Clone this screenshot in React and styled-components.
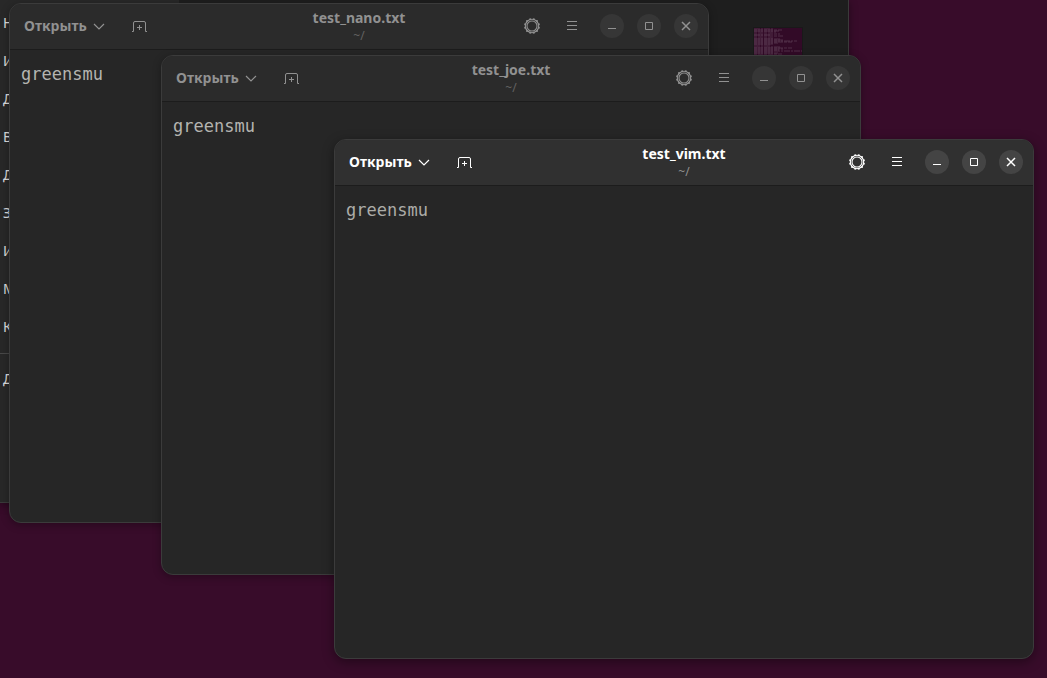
import React from "react";
import styled, { createGlobalStyle } from "styled-components";

const GlobalStyle = createGlobalStyle`
  * { box-sizing: border-box; }
  body {
    margin: 0;
    background: #380c2a;
    font-family: "Noto Sans", "Open Sans", sans-serif;
  }
`;

const Desktop = styled.main`
  position: relative;
  min-height: 100vh;
  overflow: hidden;
  background: #380c2a;
`;

/* File manager behind the editors, partly beyond the screen edge */
const FilesWindow = styled.section`
  position: absolute;
  left: 0;
  top: 0;
  width: 849px;
  height: 503px;
  display: grid;
  grid-template-columns: 179px 1fr;
  border-right: 1px solid #3a3a3a;
  border-bottom: 1px solid #3a3a3a;
  background: #1e1e1e;
  box-shadow: 0 2px 8px rgba(0, 0, 0, 0.4);
`;

const Places = styled.nav`
  padding-top: 4px;
  background: #282828;
`;

const PlaceList = styled.ul`
  list-style: none;
  margin: 0;
  padding: 0;

  & + & {
    margin-top: 7px;
    padding-top: 6px;
    border-top: 1px solid #484848;
  }
`;

const Place = styled.a`
  display: block;
  height: 38px;
  padding-left: 3px;
  font-size: 14px;
  line-height: 38px;
  color: #dedede;
  text-decoration: none;
`;

const FileGrid = styled.div`
  display: flex;
  justify-content: flex-end;
  align-items: flex-start;
  padding: 27px 45px;
`;

const Window = styled.section`
  position: absolute;
  left: ${(p) => p.$x}px;
  top: ${(p) => p.$y}px;
  width: 700px;
  height: 520px;
  display: flex;
  flex-direction: column;
  overflow: hidden;
  border: 1px solid #3b3b3b;
  border-radius: 12px;
  background: #262626;
  box-shadow: ${(p) =>
    p.$active ? "0 3px 12px rgba(0, 0, 0, 0.4)" : "0 2px 8px rgba(0, 0, 0, 0.3)"};
`;

const HeaderBar = styled.header`
  display: grid;
  grid-template-columns: 1fr auto 1fr;
  align-items: center;
  height: 46px;
  flex: none;
  padding-bottom: 2px;
  border-bottom: 1px solid #1c1c1c;
  background: ${(p) => (p.$active ? "#303030" : "#2b2b2b")};
  color: ${(p) => (p.$active ? "#ffffff" : "#919191")};
`;

const Group = styled.div`
  display: flex;
  align-items: center;
  justify-content: ${(p) => (p.$end ? "flex-end" : "flex-start")};
  padding: ${(p) => (p.$end ? "0 10px 0 0" : "0 0 0 14px")};
`;

const OpenButton = styled.button`
  display: flex;
  align-items: center;
  gap: 4px;
  padding: 0;
  margin-right: 17px;
  border: 0;
  background: none;
  color: inherit;
  font: bold 14px/24px "Noto Sans", "Open Sans", sans-serif;
`;

const IconButton = styled.button`
  display: grid;
  place-items: center;
  width: 32px;
  height: 32px;
  padding: 0;
  margin-right: ${(p) => p.$gap || 0}px;
  border: 0;
  background: none;
  color: inherit;
`;

const Controls = styled.div`
  display: flex;
  gap: 13px;
`;

const ControlButton = styled.button`
  display: grid;
  place-items: center;
  width: 24px;
  height: 24px;
  padding: 0;
  border: 0;
  border-radius: 50%;
  background: ${(p) => (p.$active ? "#444444" : "#363636")};
  color: inherit;
`;

const Titles = styled.div`
  align-self: start;
  padding-top: 5px;
  text-align: center;
`;

const Title = styled.h1`
  margin: 0;
  font-size: 14px;
  line-height: 18px;
  font-weight: bold;
`;

const Subtitle = styled.p`
  margin: 0;
  font-size: 12px;
  line-height: 18px;
  color: ${(p) => (p.$active ? "#8f8f8f" : "#626262")};
`;

const Editor = styled.textarea`
  flex: 1;
  width: 100%;
  padding: 12px 11px;
  border: 0;
  outline: 0;
  resize: none;
  background: transparent;
  color: ${(p) => (p.$active ? "#acaca8" : "#b4b4b0")};
  font: 17px/24px "DejaVu Sans Mono", monospace;
`;

const Icon = ({ children }) => (
  <svg
    width="16"
    height="16"
    viewBox="0 0 16 16"
    fill="none"
    stroke="currentColor"
    aria-hidden="true"
  >
    {children}
  </svg>
);

const ChevronIcon = () => (
  <Icon>
    <path d="M3 6l5 5 5-5" strokeWidth="1.2" />
  </Icon>
);

const NewTabIcon = () => (
  <Icon>
    <path d="M0 13.5H1.5V5Q1.5 3.5 3 3.5H12Q13.5 3.5 13.5 5V13.5H15M5 9.5H10M7.5 7V12" />
  </Icon>
);

const teeth = Array.from({ length: 12 }, (_, i) => {
  const a = ((i + 0.5) * Math.PI) / 6;
  return [8 + 7.1 * Math.cos(a), 8 + 7.1 * Math.sin(a)];
});

const GearIcon = () => (
  <Icon>
    <circle cx="8" cy="8" r="6.7" strokeWidth="1.1" />
    <circle cx="8" cy="8" r="5" strokeWidth="1.1" />
    {teeth.map(([x, y]) => (
      <circle key={`${x},${y}`} cx={x} cy={y} r="1" fill="currentColor" stroke="none" />
    ))}
  </Icon>
);

const MenuIcon = () => (
  <Icon>
    <path d="M3 3.5H13M3 7.5H13M3 11.5H13" />
  </Icon>
);

const MinimizeIcon = () => (
  <Icon>
    <path d="M4 10.5H12" />
  </Icon>
);

const MaximizeIcon = () => (
  <Icon>
    <path d="M4.5 4.5H11.5V11.5H4.5Z" />
  </Icon>
);

const CloseIcon = () => (
  <Icon>
    <path d="M4 4L12 12M12 4L4 12" strokeWidth="1.5" />
  </Icon>
);

const previewLines = [20, 28, 25, 22, 0, 26, 17, 29, 0, 20, 26, 29, 43, 38, 24, 19, 16, 0, 26, 38, 30, 25, 48, 20, 24, 28];

const Thumbnail = () => (
  <svg width="50" height="56" viewBox="0 0 50 56" role="img" aria-label="Снимок экрана">
    <rect width="49" height="56" x="0.5" y="0.5" fill="#320a27" stroke="#191919" />
    {previewLines.map((w, i) => (
      <path
        key={i}
        d={`M1 ${2 + i}H${w + 1}`}
        stroke="#765b72"
        strokeWidth="0.6"
        strokeDasharray={i % 2 ? "3 1 5 1" : "6 1 2 1"}
        opacity={w ? 0.75 : 0}
      />
    ))}
  </svg>
);

function EditorWindow({ name, x, y, active }) {
  return (
    <Window $x={x} $y={y} $active={active} aria-label={name}>
      <HeaderBar $active={active}>
        <Group>
          <OpenButton type="button">
            Открыть
            <ChevronIcon />
          </OpenButton>
          <IconButton type="button" aria-label="Новая вкладка">
            <NewTabIcon />
          </IconButton>
        </Group>
        <Titles>
          <Title>{name}</Title>
          <Subtitle $active={active}>~/</Subtitle>
        </Titles>
        <Group $end>
          <IconButton type="button" $gap={8} aria-label="Настройки">
            <GearIcon />
          </IconButton>
          <IconButton type="button" $gap={12} aria-label="Меню">
            <MenuIcon />
          </IconButton>
          <Controls>
            <ControlButton type="button" $active={active} aria-label="Свернуть">
              <MinimizeIcon />
            </ControlButton>
            <ControlButton type="button" $active={active} aria-label="Развернуть">
              <MaximizeIcon />
            </ControlButton>
            <ControlButton type="button" $active={active} aria-label="Закрыть">
              <CloseIcon />
            </ControlButton>
          </Controls>
        </Group>
      </HeaderBar>
      <Editor
        $active={active}
        aria-label={`Текст ${name}`}
        spellCheck={false}
        defaultValue="greensmu"
      />
    </Window>
  );
}

const places = ["Н", "И", "Д", "В", "Д", "З", "И", "М", "К"];
const otherPlaces = ["Д"];

const documents = [
  { name: "test_nano.txt", x: 9, y: 3 },
  { name: "test_joe.txt", x: 161, y: 55 },
  { name: "test_vim.txt", x: 334, y: 139, active: true },
];

export default function App() {
  return (
    <>
      <GlobalStyle />
      <Desktop>
        <FilesWindow>
          <Places>
            {[places, otherPlaces].map((group, g) => (
              <PlaceList key={g}>
                {group.map((label, i) => (
                  <li key={i}>
                    <Place href="#">{label}</Place>
                  </li>
                ))}
              </PlaceList>
            ))}
          </Places>
          <FileGrid>
            <Thumbnail />
          </FileGrid>
        </FilesWindow>
        {documents.map((doc) => (
          <EditorWindow key={doc.name} {...doc} />
        ))}
      </Desktop>
    </>
  );
}
